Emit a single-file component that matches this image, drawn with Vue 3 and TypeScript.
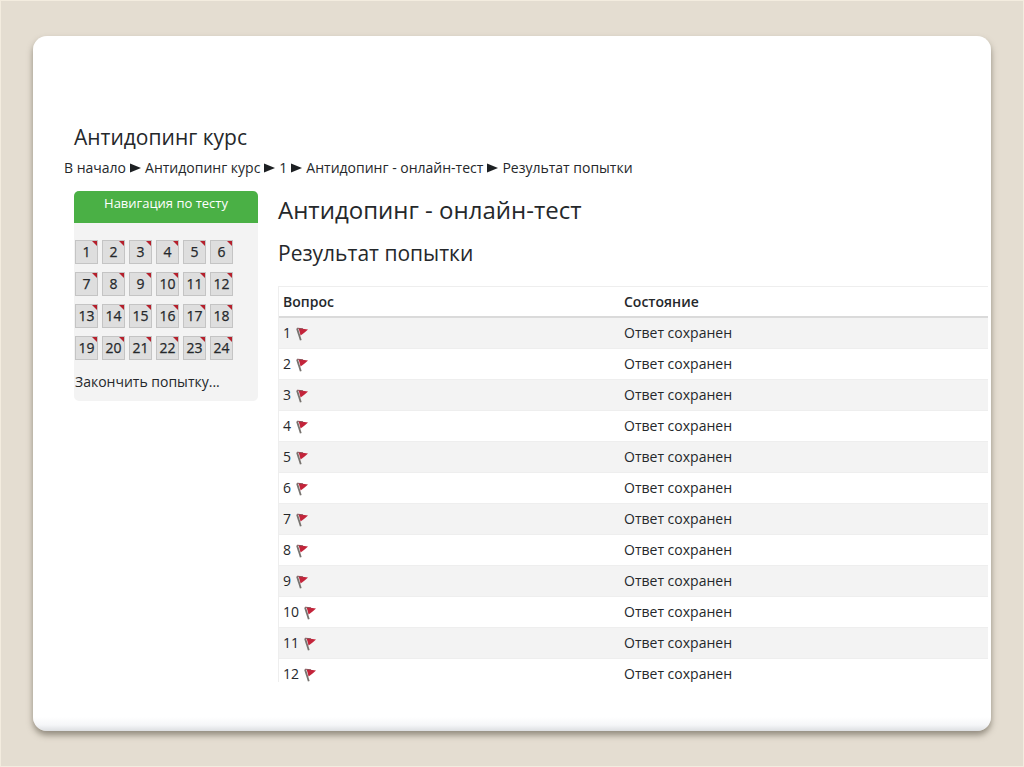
<script setup lang="ts">
const crumbs: string[] = ['В начало', 'Антидопинг курс', '1', 'Антидопинг - онлайн-тест', 'Результат попытки']
const questions: number[] = Array.from({ length: 24 }, (_, i) => i + 1)
const rows: number[] = questions.slice(0, 12)
</script>

<template>
  <div class="slide">
    <main class="card">
      <h1 class="course">Антидопинг курс</h1>
      <nav class="crumbs" aria-label="Навигация">
        <template v-for="(crumb, i) in crumbs" :key="crumb">
          <svg v-if="i > 0" class="arrow" viewBox="0 0 11 10" aria-hidden="true"><path d="M0 0.5 L11 5 L0 9.5 Z" /></svg>
          <a href="#">{{ crumb }}</a>
        </template>
      </nav>
      <div class="columns">
        <aside class="block">
          <h2 class="block-title">Навигация по тесту</h2>
          <div class="block-body">
            <div class="grid">
              <button v-for="q in questions" :key="q" type="button" class="question">{{ q }}</button>
            </div>
            <a class="finish" href="#">Закончить попытку...</a>
          </div>
        </aside>
        <section class="content">
          <h2 class="title">Антидопинг - онлайн-тест</h2>
          <h3 class="subtitle">Результат попытки</h3>
          <div class="table-view">
            <table>
              <thead>
                <tr>
                  <th scope="col" class="first">Вопрос</th>
                  <th scope="col">Состояние</th>
                </tr>
              </thead>
              <tbody>
                <tr v-for="n in rows" :key="n">
                  <td>
                    <span class="number">{{ n }}</span>
                    <svg class="flag" viewBox="0 0 12 14" aria-hidden="true">
                      <path d="M1 1.4 L4.8 13.2" stroke="#77736f" stroke-width="1.8" fill="none" />
                      <path d="M2.6 1.2 L12 2.4 L8.6 5.4 L4.6 8.4 Z" fill="#c3243a" />
                      <path d="M1.2 1.2 L7 1.8" stroke="#8d5158" stroke-width="1" fill="none" />
                    </svg>
                  </td>
                  <td>Ответ сохранен</td>
                </tr>
              </tbody>
            </table>
          </div>
        </section>
      </div>
    </main>
  </div>
</template>

<style>
body {
  margin: 0;
}
</style>

<style scoped>
.slide {
  box-sizing: border-box;
  min-height: 100vh;
  padding: 35px 32px;
  display: flex;
  background: #e4ddd1;
  border: 1px solid #f3ecdf;
  font-family: "Open Sans", "Noto Sans", sans-serif;
  font-size: 14px;
  line-height: 20px;
  color: #25282b;
}
.card {
  box-sizing: border-box;
  flex: 1;
  min-width: 0;
  padding: 84px 3px 48px 41px;
  border-radius: 14px;
  background: linear-gradient(to top, #dddfe2 0, #f5f6f8 6px, #ffffff 14px);
  box-shadow: 0 4px 6px rgba(90, 84, 70, 0.6);
}
a {
  color: inherit;
  text-decoration: none;
}
h1,
h2,
h3 {
  margin: 0;
  font-weight: 400;
}
.course {
  font-size: 21px;
  line-height: 34px;
}
.crumbs {
  display: flex;
  align-items: center;
  gap: 4px;
  margin-left: -10px;
  padding: 4px 0 12px;
}
.arrow {
  width: 11px;
  height: 10px;
  fill: #1d2023;
}
.columns {
  display: flex;
  align-items: flex-start;
  gap: 20px;
}
.block {
  flex: 0 0 184px;
  margin-top: 1px;
  border-radius: 5px;
  overflow: hidden;
  background: #f3f3f3;
}
.block-title {
  padding: 2px 0 10px;
  background: #4ab045;
  color: #ffffff;
  font-size: 13px;
  line-height: 20px;
  text-align: center;
}
.block-body {
  padding: 17px 1px 9px;
}
.grid {
  display: grid;
  grid-template-columns: repeat(6, 23px);
  gap: 8px 4px;
}
.question {
  position: relative;
  height: 24px;
  padding: 0;
  border: 1px solid #c4c4c4;
  background: #dedede;
  color: #25282b;
  font: inherit;
  font-weight: 500;
  line-height: 22px;
  -webkit-text-stroke: 0.25px #25282b;
}
.question::after {
  content: "";
  position: absolute;
  top: 0;
  right: 0;
  border-top: 5px solid #b5202c;
  border-left: 5px solid transparent;
}
.finish {
  display: block;
  margin-top: 12px;
}
.content {
  flex: 1;
  min-width: 0;
}
.title {
  font-size: 24px;
  line-height: 40px;
}
.subtitle {
  margin-top: 8px;
  font-size: 21px;
  line-height: 30px;
}
.table-view {
  height: 396px;
  margin-top: 18px;
  overflow: hidden;
}
table {
  width: 100%;
  border-collapse: separate;
  border-spacing: 0;
  border-top: 1px solid #eeeeee;
  border-left: 1px solid #eeeeee;
}
th,
td {
  height: 30px;
  padding: 0 4px;
  text-align: left;
  border-bottom: 1px solid #eeeeee;
}
th {
  height: 29px;
  font-weight: 600;
  border-bottom: 2px solid #dadada;
}
.first {
  width: 333px;
}
tbody tr:nth-child(odd) {
  background: #f3f3f3;
}
.flag {
  width: 12px;
  height: 14px;
  margin-left: 5px;
  vertical-align: -3px;
}
</style>
